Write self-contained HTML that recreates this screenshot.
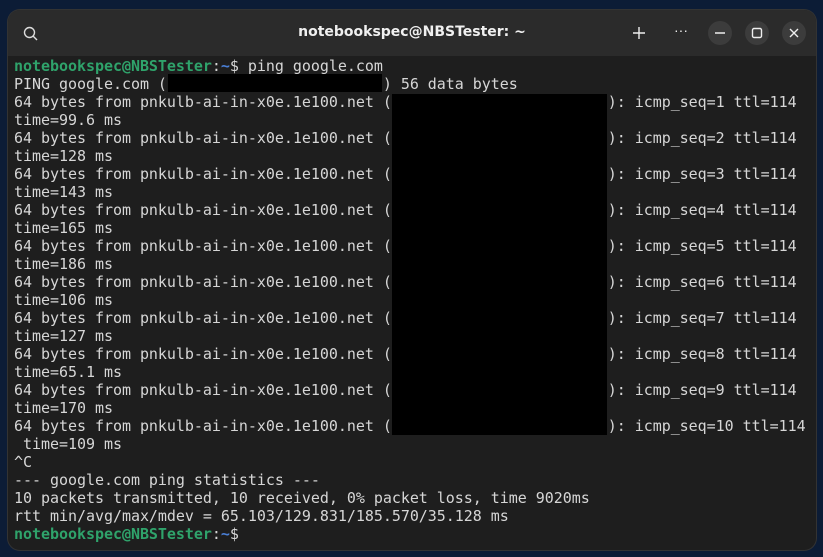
<!DOCTYPE html>
<html><head><style>
html,body{margin:0;padding:0;width:823px;height:557px;overflow:hidden;background:#0c1c36;}
.win{position:absolute;left:8px;top:10px;width:808px;height:540px;background:#1e1e1e;border-radius:12px;overflow:hidden;box-shadow:0 0 0 1px #333;}
.tb{position:absolute;left:0;top:0;width:100%;height:46px;background:#2b2b2b;}
.title{position:absolute;left:0;right:0;top:14px;text-align:center;color:#f0f0f0;font:bold 14px "DejaVu Sans","Liberation Sans",sans-serif;}
.btn{position:absolute;top:11px;width:24px;height:24px;border-radius:12px;background:#3c3c3c;}
pre{position:absolute;left:6px;top:47px;margin:0;font:15px/18px "DejaVu Sans Mono","Liberation Mono",monospace;letter-spacing:-0.035px;color:#d6d6d6;}
.g{color:#2fa36b;font-weight:bold}.b{color:#4a7fd6;font-weight:bold}
.blk{position:absolute;background:#000;}
</style></head><body>
<div class="win">
<div class="tb">
<svg style="position:absolute;left:15px;top:16px" width="16" height="16"><circle cx="6.5" cy="6.5" r="5" fill="none" stroke="#ddd" stroke-width="1.4"/><line x1="10" y1="10" x2="14" y2="14" stroke="#ddd" stroke-width="1.4"/></svg>
<div class="title">notebookspec@NBSTester: ~</div>
<svg style="position:absolute;left:624px;top:16px" width="14" height="14"><path d="M7 1V13M1 7H13" stroke="#eee" stroke-width="1.4"/></svg>
<div style="position:absolute;left:666px;top:12px;color:#eee;font:14px sans-serif">···</div>
<div class="btn" style="left:700px"><svg width="24" height="24"><path d="M7 12H17" stroke="#eee" stroke-width="1.4"/></svg></div>
<div class="btn" style="left:737px"><svg width="24" height="24"><rect x="7.5" y="7.5" width="9" height="9" rx="1.5" fill="none" stroke="#eee" stroke-width="1.4"/></svg></div>
<div class="btn" style="left:774px"><svg width="24" height="24"><path d="M8 8L16 16M16 8L8 16" stroke="#eee" stroke-width="1.4"/></svg></div>
</div>
<pre><span class="g">notebookspec@NBSTester</span>:<span class="b">~</span>$ ping google.com
PING google.com (                        ) 56 data bytes
64 bytes from pnkulb-ai-in-x0e.1e100.net (                        ): icmp_seq=1 ttl=114
time=99.6 ms
64 bytes from pnkulb-ai-in-x0e.1e100.net (                        ): icmp_seq=2 ttl=114
time=128 ms
64 bytes from pnkulb-ai-in-x0e.1e100.net (                        ): icmp_seq=3 ttl=114
time=143 ms
64 bytes from pnkulb-ai-in-x0e.1e100.net (                        ): icmp_seq=4 ttl=114
time=165 ms
64 bytes from pnkulb-ai-in-x0e.1e100.net (                        ): icmp_seq=5 ttl=114
time=186 ms
64 bytes from pnkulb-ai-in-x0e.1e100.net (                        ): icmp_seq=6 ttl=114
time=106 ms
64 bytes from pnkulb-ai-in-x0e.1e100.net (                        ): icmp_seq=7 ttl=114
time=127 ms
64 bytes from pnkulb-ai-in-x0e.1e100.net (                        ): icmp_seq=8 ttl=114
time=65.1 ms
64 bytes from pnkulb-ai-in-x0e.1e100.net (                        ): icmp_seq=9 ttl=114
time=170 ms
64 bytes from pnkulb-ai-in-x0e.1e100.net (                        ): icmp_seq=10 ttl=114
 time=109 ms
^C
--- google.com ping statistics ---
10 packets transmitted, 10 received, 0% packet loss, time 9020ms
rtt min/avg/max/mdev = 65.103/129.831/185.570/35.128 ms
<span class="g">notebookspec@NBSTester</span>:<span class="b">~</span>$</pre>
<div class="blk" style="left:160px;top:64px;width:214px;height:18px"></div>
<div class="blk" style="left:384px;top:84px;width:215px;height:341px"></div>
</div>
</body></html>
